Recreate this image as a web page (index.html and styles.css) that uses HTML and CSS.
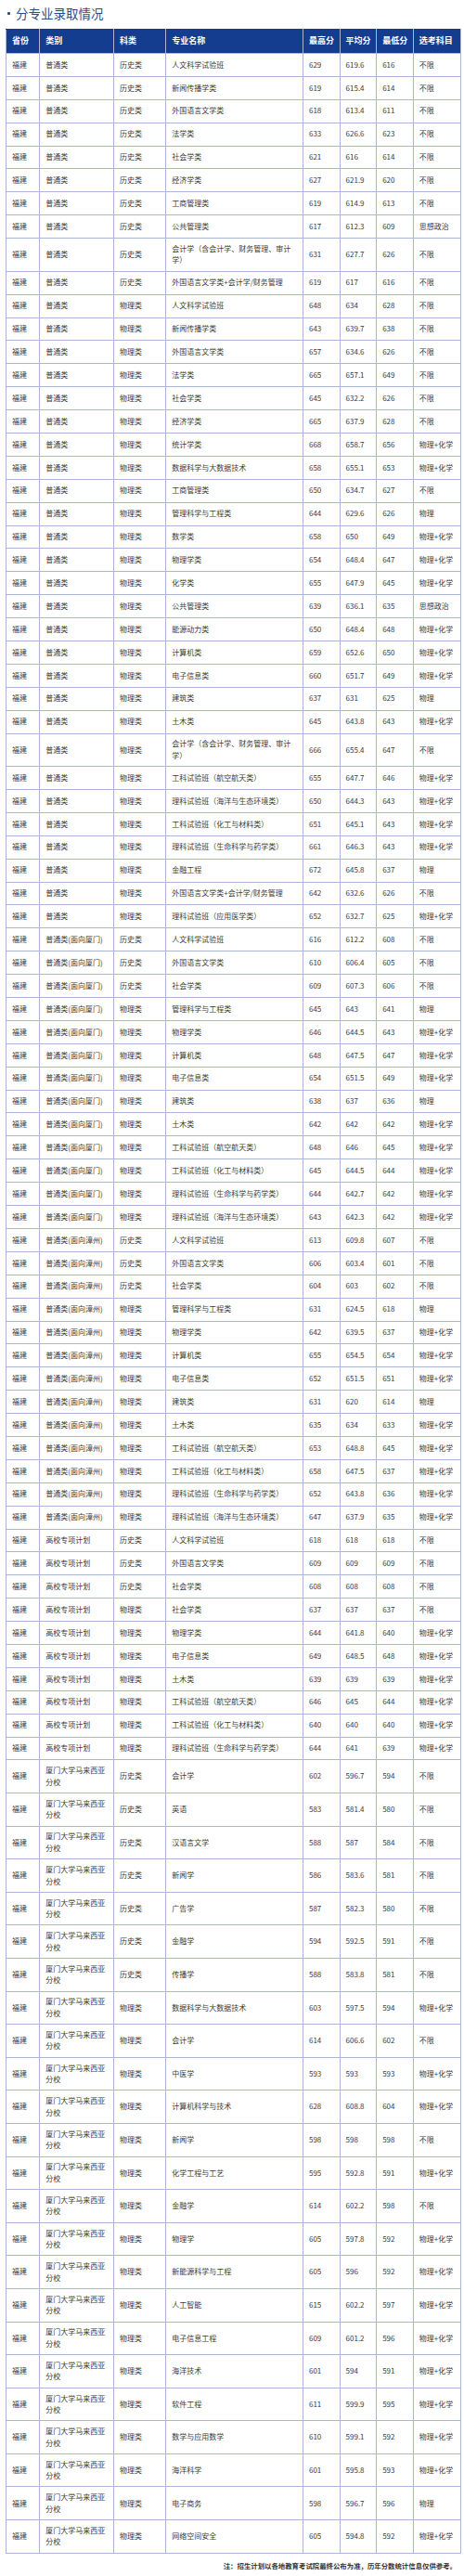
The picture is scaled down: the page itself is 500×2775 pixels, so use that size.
FILE: index.html
```html
<!DOCTYPE html>
<html lang="zh-CN">
<head>
<meta charset="utf-8">
<title>分专业录取情况</title>
<link rel="stylesheet" href="styles.css">
</head>
<body>
<div class="page">
<h2 class="title"><span class="dot"></span>分专业录取情况</h2>
<table class="score-table">
<colgroup>
<col class="c-prov"><col class="c-type"><col class="c-sub"><col class="c-major"><col class="c-num"><col class="c-num"><col class="c-num"><col class="c-req">
</colgroup>
<thead>
<tr><th>省份</th><th>类别</th><th>科类</th><th>专业名称</th><th>最高分</th><th>平均分</th><th>最低分</th><th>选考科目</th></tr>
</thead>
<tbody>
<tr><td>福建</td><td>普通类</td><td>历史类</td><td>人文科学试验班</td><td>629</td><td>619.6</td><td>616</td><td>不限</td></tr>
<tr><td>福建</td><td>普通类</td><td>历史类</td><td>新闻传播学类</td><td>619</td><td>615.4</td><td>614</td><td>不限</td></tr>
<tr><td>福建</td><td>普通类</td><td>历史类</td><td>外国语言文学类</td><td>618</td><td>613.4</td><td>611</td><td>不限</td></tr>
<tr><td>福建</td><td>普通类</td><td>历史类</td><td>法学类</td><td>633</td><td>626.6</td><td>623</td><td>不限</td></tr>
<tr><td>福建</td><td>普通类</td><td>历史类</td><td>社会学类</td><td>621</td><td>616</td><td>614</td><td>不限</td></tr>
<tr><td>福建</td><td>普通类</td><td>历史类</td><td>经济学类</td><td>627</td><td>621.9</td><td>620</td><td>不限</td></tr>
<tr><td>福建</td><td>普通类</td><td>历史类</td><td>工商管理类</td><td>619</td><td>614.9</td><td>613</td><td>不限</td></tr>
<tr><td>福建</td><td>普通类</td><td>历史类</td><td>公共管理类</td><td>617</td><td>612.3</td><td>609</td><td>思想政治</td></tr>
<tr><td>福建</td><td>普通类</td><td>历史类</td><td>会计学（含会计学、财务管理、审计学）</td><td>631</td><td>627.7</td><td>626</td><td>不限</td></tr>
<tr><td>福建</td><td>普通类</td><td>历史类</td><td>外国语言文学类+会计学/财务管理</td><td>619</td><td>617</td><td>616</td><td>不限</td></tr>
<tr><td>福建</td><td>普通类</td><td>物理类</td><td>人文科学试验班</td><td>648</td><td>634</td><td>628</td><td>不限</td></tr>
<tr><td>福建</td><td>普通类</td><td>物理类</td><td>新闻传播学类</td><td>643</td><td>639.7</td><td>638</td><td>不限</td></tr>
<tr><td>福建</td><td>普通类</td><td>物理类</td><td>外国语言文学类</td><td>657</td><td>634.6</td><td>626</td><td>不限</td></tr>
<tr><td>福建</td><td>普通类</td><td>物理类</td><td>法学类</td><td>665</td><td>657.1</td><td>649</td><td>不限</td></tr>
<tr><td>福建</td><td>普通类</td><td>物理类</td><td>社会学类</td><td>645</td><td>632.2</td><td>626</td><td>不限</td></tr>
<tr><td>福建</td><td>普通类</td><td>物理类</td><td>经济学类</td><td>665</td><td>637.9</td><td>628</td><td>不限</td></tr>
<tr><td>福建</td><td>普通类</td><td>物理类</td><td>统计学类</td><td>668</td><td>658.7</td><td>656</td><td>物理+化学</td></tr>
<tr><td>福建</td><td>普通类</td><td>物理类</td><td>数据科学与大数据技术</td><td>658</td><td>655.1</td><td>653</td><td>物理+化学</td></tr>
<tr><td>福建</td><td>普通类</td><td>物理类</td><td>工商管理类</td><td>650</td><td>634.7</td><td>627</td><td>不限</td></tr>
<tr><td>福建</td><td>普通类</td><td>物理类</td><td>管理科学与工程类</td><td>644</td><td>629.6</td><td>626</td><td>物理</td></tr>
<tr><td>福建</td><td>普通类</td><td>物理类</td><td>数学类</td><td>658</td><td>650</td><td>649</td><td>物理+化学</td></tr>
<tr><td>福建</td><td>普通类</td><td>物理类</td><td>物理学类</td><td>654</td><td>648.4</td><td>647</td><td>物理+化学</td></tr>
<tr><td>福建</td><td>普通类</td><td>物理类</td><td>化学类</td><td>655</td><td>647.9</td><td>645</td><td>物理+化学</td></tr>
<tr><td>福建</td><td>普通类</td><td>物理类</td><td>公共管理类</td><td>639</td><td>636.1</td><td>635</td><td>思想政治</td></tr>
<tr><td>福建</td><td>普通类</td><td>物理类</td><td>能源动力类</td><td>650</td><td>648.4</td><td>648</td><td>物理+化学</td></tr>
<tr><td>福建</td><td>普通类</td><td>物理类</td><td>计算机类</td><td>659</td><td>652.6</td><td>650</td><td>物理+化学</td></tr>
<tr><td>福建</td><td>普通类</td><td>物理类</td><td>电子信息类</td><td>660</td><td>651.7</td><td>649</td><td>物理+化学</td></tr>
<tr><td>福建</td><td>普通类</td><td>物理类</td><td>建筑类</td><td>637</td><td>631</td><td>625</td><td>物理</td></tr>
<tr><td>福建</td><td>普通类</td><td>物理类</td><td>土木类</td><td>645</td><td>643.8</td><td>643</td><td>物理+化学</td></tr>
<tr><td>福建</td><td>普通类</td><td>物理类</td><td>会计学（含会计学、财务管理、审计学）</td><td>666</td><td>655.4</td><td>647</td><td>不限</td></tr>
<tr><td>福建</td><td>普通类</td><td>物理类</td><td>工科试验班（航空航天类）</td><td>655</td><td>647.7</td><td>646</td><td>物理+化学</td></tr>
<tr><td>福建</td><td>普通类</td><td>物理类</td><td>理科试验班（海洋与生态环境类）</td><td>650</td><td>644.3</td><td>643</td><td>物理+化学</td></tr>
<tr><td>福建</td><td>普通类</td><td>物理类</td><td>工科试验班（化工与材料类）</td><td>651</td><td>645.1</td><td>643</td><td>物理+化学</td></tr>
<tr><td>福建</td><td>普通类</td><td>物理类</td><td>理科试验班（生命科学与药学类）</td><td>661</td><td>646.3</td><td>643</td><td>物理+化学</td></tr>
<tr><td>福建</td><td>普通类</td><td>物理类</td><td>金融工程</td><td>672</td><td>645.8</td><td>637</td><td>物理</td></tr>
<tr><td>福建</td><td>普通类</td><td>物理类</td><td>外国语言文学类+会计学/财务管理</td><td>642</td><td>632.6</td><td>626</td><td>不限</td></tr>
<tr><td>福建</td><td>普通类</td><td>物理类</td><td>理科试验班（应用医学类）</td><td>652</td><td>632.7</td><td>625</td><td>物理+化学</td></tr>
<tr><td>福建</td><td>普通类(面向厦门)</td><td>历史类</td><td>人文科学试验班</td><td>616</td><td>612.2</td><td>608</td><td>不限</td></tr>
<tr><td>福建</td><td>普通类(面向厦门)</td><td>历史类</td><td>外国语言文学类</td><td>610</td><td>606.4</td><td>605</td><td>不限</td></tr>
<tr><td>福建</td><td>普通类(面向厦门)</td><td>历史类</td><td>社会学类</td><td>609</td><td>607.3</td><td>606</td><td>不限</td></tr>
<tr><td>福建</td><td>普通类(面向厦门)</td><td>物理类</td><td>管理科学与工程类</td><td>645</td><td>643</td><td>641</td><td>物理</td></tr>
<tr><td>福建</td><td>普通类(面向厦门)</td><td>物理类</td><td>物理学类</td><td>646</td><td>644.5</td><td>643</td><td>物理+化学</td></tr>
<tr><td>福建</td><td>普通类(面向厦门)</td><td>物理类</td><td>计算机类</td><td>648</td><td>647.5</td><td>647</td><td>物理+化学</td></tr>
<tr><td>福建</td><td>普通类(面向厦门)</td><td>物理类</td><td>电子信息类</td><td>654</td><td>651.5</td><td>649</td><td>物理+化学</td></tr>
<tr><td>福建</td><td>普通类(面向厦门)</td><td>物理类</td><td>建筑类</td><td>638</td><td>637</td><td>636</td><td>物理</td></tr>
<tr><td>福建</td><td>普通类(面向厦门)</td><td>物理类</td><td>土木类</td><td>642</td><td>642</td><td>642</td><td>物理+化学</td></tr>
<tr><td>福建</td><td>普通类(面向厦门)</td><td>物理类</td><td>工科试验班（航空航天类）</td><td>648</td><td>646</td><td>645</td><td>物理+化学</td></tr>
<tr><td>福建</td><td>普通类(面向厦门)</td><td>物理类</td><td>工科试验班（化工与材料类）</td><td>645</td><td>644.5</td><td>644</td><td>物理+化学</td></tr>
<tr><td>福建</td><td>普通类(面向厦门)</td><td>物理类</td><td>理科试验班（生命科学与药学类）</td><td>644</td><td>642.7</td><td>642</td><td>物理+化学</td></tr>
<tr><td>福建</td><td>普通类(面向厦门)</td><td>物理类</td><td>理科试验班（海洋与生态环境类）</td><td>643</td><td>642.3</td><td>642</td><td>物理+化学</td></tr>
<tr><td>福建</td><td>普通类(面向漳州)</td><td>历史类</td><td>人文科学试验班</td><td>613</td><td>609.8</td><td>607</td><td>不限</td></tr>
<tr><td>福建</td><td>普通类(面向漳州)</td><td>历史类</td><td>外国语言文学类</td><td>606</td><td>603.4</td><td>601</td><td>不限</td></tr>
<tr><td>福建</td><td>普通类(面向漳州)</td><td>历史类</td><td>社会学类</td><td>604</td><td>603</td><td>602</td><td>不限</td></tr>
<tr><td>福建</td><td>普通类(面向漳州)</td><td>物理类</td><td>管理科学与工程类</td><td>631</td><td>624.5</td><td>618</td><td>物理</td></tr>
<tr><td>福建</td><td>普通类(面向漳州)</td><td>物理类</td><td>物理学类</td><td>642</td><td>639.5</td><td>637</td><td>物理+化学</td></tr>
<tr><td>福建</td><td>普通类(面向漳州)</td><td>物理类</td><td>计算机类</td><td>655</td><td>654.5</td><td>654</td><td>物理+化学</td></tr>
<tr><td>福建</td><td>普通类(面向漳州)</td><td>物理类</td><td>电子信息类</td><td>652</td><td>651.5</td><td>651</td><td>物理+化学</td></tr>
<tr><td>福建</td><td>普通类(面向漳州)</td><td>物理类</td><td>建筑类</td><td>631</td><td>620</td><td>614</td><td>物理</td></tr>
<tr><td>福建</td><td>普通类(面向漳州)</td><td>物理类</td><td>土木类</td><td>635</td><td>634</td><td>633</td><td>物理+化学</td></tr>
<tr><td>福建</td><td>普通类(面向漳州)</td><td>物理类</td><td>工科试验班（航空航天类）</td><td>653</td><td>648.8</td><td>645</td><td>物理+化学</td></tr>
<tr><td>福建</td><td>普通类(面向漳州)</td><td>物理类</td><td>工科试验班（化工与材料类）</td><td>658</td><td>647.5</td><td>637</td><td>物理+化学</td></tr>
<tr><td>福建</td><td>普通类(面向漳州)</td><td>物理类</td><td>理科试验班（生命科学与药学类）</td><td>652</td><td>643.8</td><td>636</td><td>物理+化学</td></tr>
<tr><td>福建</td><td>普通类(面向漳州)</td><td>物理类</td><td>理科试验班（海洋与生态环境类）</td><td>647</td><td>637.9</td><td>635</td><td>物理+化学</td></tr>
<tr><td>福建</td><td>高校专项计划</td><td>历史类</td><td>人文科学试验班</td><td>618</td><td>618</td><td>618</td><td>不限</td></tr>
<tr><td>福建</td><td>高校专项计划</td><td>历史类</td><td>外国语言文学类</td><td>609</td><td>609</td><td>609</td><td>不限</td></tr>
<tr><td>福建</td><td>高校专项计划</td><td>历史类</td><td>社会学类</td><td>608</td><td>608</td><td>608</td><td>不限</td></tr>
<tr><td>福建</td><td>高校专项计划</td><td>物理类</td><td>社会学类</td><td>637</td><td>637</td><td>637</td><td>不限</td></tr>
<tr><td>福建</td><td>高校专项计划</td><td>物理类</td><td>物理学类</td><td>644</td><td>641.8</td><td>640</td><td>物理+化学</td></tr>
<tr><td>福建</td><td>高校专项计划</td><td>物理类</td><td>电子信息类</td><td>649</td><td>648.5</td><td>648</td><td>物理+化学</td></tr>
<tr><td>福建</td><td>高校专项计划</td><td>物理类</td><td>土木类</td><td>639</td><td>639</td><td>639</td><td>物理+化学</td></tr>
<tr><td>福建</td><td>高校专项计划</td><td>物理类</td><td>工科试验班（航空航天类）</td><td>646</td><td>645</td><td>644</td><td>物理+化学</td></tr>
<tr><td>福建</td><td>高校专项计划</td><td>物理类</td><td>工科试验班（化工与材料类）</td><td>640</td><td>640</td><td>640</td><td>物理+化学</td></tr>
<tr><td>福建</td><td>高校专项计划</td><td>物理类</td><td>理科试验班（生命科学与药学类）</td><td>644</td><td>641</td><td>639</td><td>物理+化学</td></tr>
<tr><td>福建</td><td>厦门大学马来西亚分校</td><td>历史类</td><td>会计学</td><td>602</td><td>596.7</td><td>594</td><td>不限</td></tr>
<tr><td>福建</td><td>厦门大学马来西亚分校</td><td>历史类</td><td>英语</td><td>583</td><td>581.4</td><td>580</td><td>不限</td></tr>
<tr><td>福建</td><td>厦门大学马来西亚分校</td><td>历史类</td><td>汉语言文学</td><td>588</td><td>587</td><td>584</td><td>不限</td></tr>
<tr><td>福建</td><td>厦门大学马来西亚分校</td><td>历史类</td><td>新闻学</td><td>586</td><td>583.6</td><td>581</td><td>不限</td></tr>
<tr><td>福建</td><td>厦门大学马来西亚分校</td><td>历史类</td><td>广告学</td><td>587</td><td>582.3</td><td>580</td><td>不限</td></tr>
<tr><td>福建</td><td>厦门大学马来西亚分校</td><td>历史类</td><td>金融学</td><td>594</td><td>592.5</td><td>591</td><td>不限</td></tr>
<tr><td>福建</td><td>厦门大学马来西亚分校</td><td>历史类</td><td>传播学</td><td>588</td><td>583.8</td><td>581</td><td>不限</td></tr>
<tr><td>福建</td><td>厦门大学马来西亚分校</td><td>物理类</td><td>数据科学与大数据技术</td><td>603</td><td>597.5</td><td>594</td><td>物理+化学</td></tr>
<tr><td>福建</td><td>厦门大学马来西亚分校</td><td>物理类</td><td>会计学</td><td>614</td><td>606.6</td><td>602</td><td>不限</td></tr>
<tr><td>福建</td><td>厦门大学马来西亚分校</td><td>物理类</td><td>中医学</td><td>593</td><td>593</td><td>593</td><td>物理+化学</td></tr>
<tr><td>福建</td><td>厦门大学马来西亚分校</td><td>物理类</td><td>计算机科学与技术</td><td>628</td><td>608.8</td><td>604</td><td>物理+化学</td></tr>
<tr><td>福建</td><td>厦门大学马来西亚分校</td><td>物理类</td><td>新闻学</td><td>598</td><td>598</td><td>598</td><td>不限</td></tr>
<tr><td>福建</td><td>厦门大学马来西亚分校</td><td>物理类</td><td>化学工程与工艺</td><td>595</td><td>592.8</td><td>591</td><td>物理+化学</td></tr>
<tr><td>福建</td><td>厦门大学马来西亚分校</td><td>物理类</td><td>金融学</td><td>614</td><td>602.2</td><td>598</td><td>不限</td></tr>
<tr><td>福建</td><td>厦门大学马来西亚分校</td><td>物理类</td><td>物理学</td><td>605</td><td>597.8</td><td>592</td><td>物理+化学</td></tr>
<tr><td>福建</td><td>厦门大学马来西亚分校</td><td>物理类</td><td>新能源科学与工程</td><td>605</td><td>596</td><td>592</td><td>物理+化学</td></tr>
<tr><td>福建</td><td>厦门大学马来西亚分校</td><td>物理类</td><td>人工智能</td><td>615</td><td>602.2</td><td>597</td><td>物理+化学</td></tr>
<tr><td>福建</td><td>厦门大学马来西亚分校</td><td>物理类</td><td>电子信息工程</td><td>609</td><td>601.2</td><td>596</td><td>物理+化学</td></tr>
<tr><td>福建</td><td>厦门大学马来西亚分校</td><td>物理类</td><td>海洋技术</td><td>601</td><td>594</td><td>591</td><td>物理+化学</td></tr>
<tr><td>福建</td><td>厦门大学马来西亚分校</td><td>物理类</td><td>软件工程</td><td>611</td><td>599.9</td><td>595</td><td>物理+化学</td></tr>
<tr><td>福建</td><td>厦门大学马来西亚分校</td><td>物理类</td><td>数学与应用数学</td><td>610</td><td>599.1</td><td>592</td><td>物理+化学</td></tr>
<tr><td>福建</td><td>厦门大学马来西亚分校</td><td>物理类</td><td>海洋科学</td><td>601</td><td>595.8</td><td>593</td><td>物理+化学</td></tr>
<tr><td>福建</td><td>厦门大学马来西亚分校</td><td>物理类</td><td>电子商务</td><td>598</td><td>596.7</td><td>596</td><td>物理</td></tr>
<tr><td>福建</td><td>厦门大学马来西亚分校</td><td>物理类</td><td>网络空间安全</td><td>605</td><td>594.8</td><td>592</td><td>物理+化学</td></tr>
</tbody>
</table>
<p class="note">注：招生计划以各地教育考试院最终公布为准，历年分数统计信息仅供参考。</p>
</div>
</body>
</html>
```
FILE: styles.css
```css
html, body {
  margin: 0;
  padding: 0;
  background: #ffffff;
}

body {
  font-family: "Noto Sans CJK SC", "Noto Sans", sans-serif;
  color: #333333;
}

.page {
  padding: 0 4px 0 6px;
}

.title {
  display: flex;
  align-items: center;
  height: 28px;
  margin: 0 0 3px 0;
  padding-left: 2px;
  font-size: 13.5px;
  font-weight: 400;
  color: #2b4b8c;
  line-height: 28px;
}

.title .dot {
  display: inline-block;
  width: 3px;
  height: 3px;
  background: #2b4b8c;
  border-radius: 1px;
  margin-right: 6px;
}

.score-table {
  width: 490px;
  border-collapse: collapse;
  table-layout: fixed;
  font-size: 8px;
  line-height: 12.5px;
}

.c-prov { width: 36.3px; }
.c-type { width: 79.7px; }
.c-sub { width: 56.3px; }
.c-major { width: 147.7px; }
.c-num { width: 39.6px; }
.c-req { width: 51.2px; }

.score-table th {
  height: 25px;
  padding: 0 3px 0 6px;
  background: #143d8f;
  color: #ffffff;
  font-size: 9px;
  font-weight: 700;
  text-align: left;
  border: 1px solid #a9b6d6;
  border-top-color: #143d8f;
}

.score-table td {
  padding: 4.8px 6px 4.8px 6px;
  text-align: left;
  vertical-align: middle;
  border: 1px solid #a9b6d6;
  color: #3a3a3a;
  word-break: break-all;
}

.score-table tbody tr {
  height: 24.9px;
}

.note {
  margin: 7px 4px 0 0;
  text-align: right;
  font-size: 7.4px;
  font-weight: 700;
  line-height: 12px;
  color: #333333;
}
```
